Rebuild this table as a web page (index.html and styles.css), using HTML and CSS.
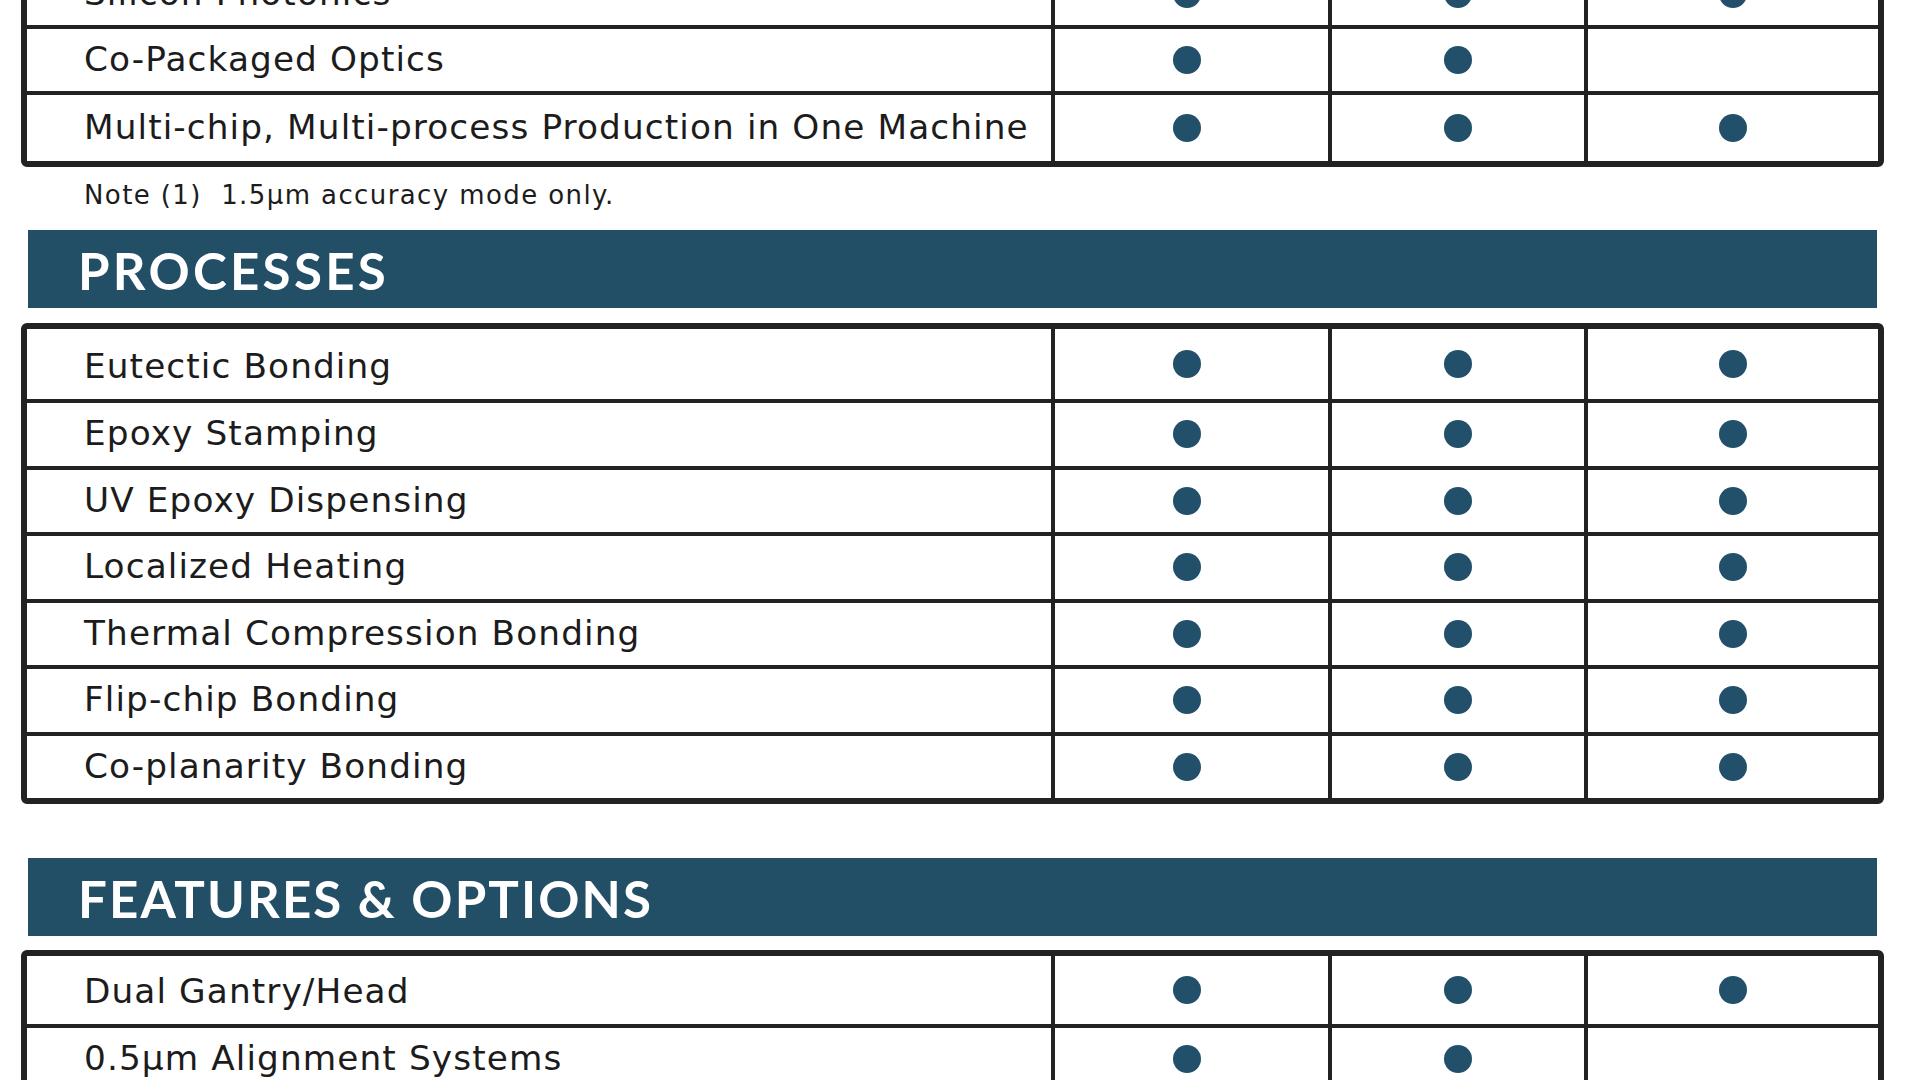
FILE: index.html
```html
<!DOCTYPE html>
<html lang="en">
<head>
<meta charset="utf-8">
<title>Capabilities</title>
<link rel="stylesheet" href="styles.css">
</head>
<body>
<div class="sheet">
  <div class="table table-top">
    <div class="row r63">
      <div class="label">Silicon Photonics</div>
      <div class="cell"><span class="dot"></span></div>
      <div class="cell"><span class="dot"></span></div>
      <div class="cell"><span class="dot"></span></div>
    </div>
    <div class="row r62">
      <div class="label">Co-Packaged Optics</div>
      <div class="cell"><span class="dot"></span></div>
      <div class="cell"><span class="dot"></span></div>
      <div class="cell"></div>
    </div>
    <div class="row r66">
      <div class="label">Multi-chip, Multi-process Production in One Machine</div>
      <div class="cell"><span class="dot"></span></div>
      <div class="cell"><span class="dot"></span></div>
      <div class="cell"><span class="dot"></span></div>
    </div>
  </div>

  <p class="note">Note (1)&nbsp; 1.5µm accuracy mode only.</p>

  <h2 class="bar">PROCESSES</h2>

  <div class="table table-processes">
    <div class="row r70">
      <div class="label">Eutectic Bonding</div>
      <div class="cell"><span class="dot"></span></div>
      <div class="cell"><span class="dot"></span></div>
      <div class="cell"><span class="dot"></span></div>
    </div>
    <div class="row">
      <div class="label">Epoxy Stamping</div>
      <div class="cell"><span class="dot"></span></div>
      <div class="cell"><span class="dot"></span></div>
      <div class="cell"><span class="dot"></span></div>
    </div>
    <div class="row">
      <div class="label">UV Epoxy Dispensing</div>
      <div class="cell"><span class="dot"></span></div>
      <div class="cell"><span class="dot"></span></div>
      <div class="cell"><span class="dot"></span></div>
    </div>
    <div class="row">
      <div class="label">Localized Heating</div>
      <div class="cell"><span class="dot"></span></div>
      <div class="cell"><span class="dot"></span></div>
      <div class="cell"><span class="dot"></span></div>
    </div>
    <div class="row">
      <div class="label">Thermal Compression Bonding</div>
      <div class="cell"><span class="dot"></span></div>
      <div class="cell"><span class="dot"></span></div>
      <div class="cell"><span class="dot"></span></div>
    </div>
    <div class="row">
      <div class="label">Flip-chip Bonding</div>
      <div class="cell"><span class="dot"></span></div>
      <div class="cell"><span class="dot"></span></div>
      <div class="cell"><span class="dot"></span></div>
    </div>
    <div class="row">
      <div class="label">Co-planarity Bonding</div>
      <div class="cell"><span class="dot"></span></div>
      <div class="cell"><span class="dot"></span></div>
      <div class="cell"><span class="dot"></span></div>
    </div>
  </div>

  <h2 class="bar bar-features">FEATURES &amp; OPTIONS</h2>

  <div class="table table-features">
    <div class="row r68">
      <div class="label">Dual Gantry/Head</div>
      <div class="cell"><span class="dot"></span></div>
      <div class="cell"><span class="dot"></span></div>
      <div class="cell"><span class="dot"></span></div>
    </div>
    <div class="row">
      <div class="label">0.5µm Alignment Systems</div>
      <div class="cell"><span class="dot"></span></div>
      <div class="cell"><span class="dot"></span></div>
      <div class="cell"></div>
    </div>
    <div class="row">
      <div class="label">Die Flipper</div>
      <div class="cell"><span class="dot"></span></div>
      <div class="cell"><span class="dot"></span></div>
      <div class="cell"><span class="dot"></span></div>
    </div>
  </div>
</div>
</body>
</html>
```

FILE: styles.css
```css
html, body {
  margin: 0;
  padding: 0;
  background: #ffffff;
}

body {
  font-family: "DejaVu Sans", "Liberation Sans", sans-serif;
  color: #1c1c1c;
  overflow: hidden;
  height: 1080px;
}

.sheet {
  padding: 0 36px 0 21px;
}

.table {
  border: 6px solid #222222;
  border-radius: 6px;
  background: #ffffff;
}

.table-top {
  margin-top: -44px;
}

.row {
  display: grid;
  grid-template-columns: 1024px 277px 256px 1fr;
  height: 66.5px;
  border-top: 4px solid #222222;
  box-sizing: border-box;
}

.row:first-child {
  border-top: 0;
  height: 63px;
}

.row.r62 { height: 66px; }
.row.r66 { height: 70px; }
.row.r70:first-child { height: 70px; }
.row.r68:first-child { height: 68px; }

.label {
  display: flex;
  align-items: center;
  padding: 0 0 2px 57px;
  font-size: 34.3px;
  letter-spacing: 1.1px;
  white-space: nowrap;
}

.r70 .label {
  padding: 4px 0 0 57px;
}

.r68 .label {
  padding: 2px 0 0 57px;
}

.cell {
  display: flex;
  align-items: center;
  justify-content: center;
  border-left: 4px solid #222222;
}

.cell:nth-child(2) {
  padding-right: 10px;
}

.dot {
  width: 28px;
  height: 28px;
  border-radius: 50%;
  background: #22506a;
}

.note {
  margin: 0;
  padding: 13px 0 0 63px;
  height: 50px;
  font-size: 26px;
  line-height: 30px;
  letter-spacing: 1.4px;
}

.bar {
  margin: 0 7px;
  height: 78px;
  box-sizing: border-box;
  padding: 2px 0 0 50px;
  display: flex;
  align-items: center;
  background: #234f66;
  color: #ffffff;
  font-family: "Lato", "DejaVu Sans", sans-serif;
  font-size: 51px;
  font-weight: 700;
  letter-spacing: 3.3px;
}

.table-processes {
  margin-top: 15px;
}

.bar-features {
  margin-top: 54px;
  letter-spacing: 2.1px;
}

.table-features {
  margin-top: 14px;
}
```
